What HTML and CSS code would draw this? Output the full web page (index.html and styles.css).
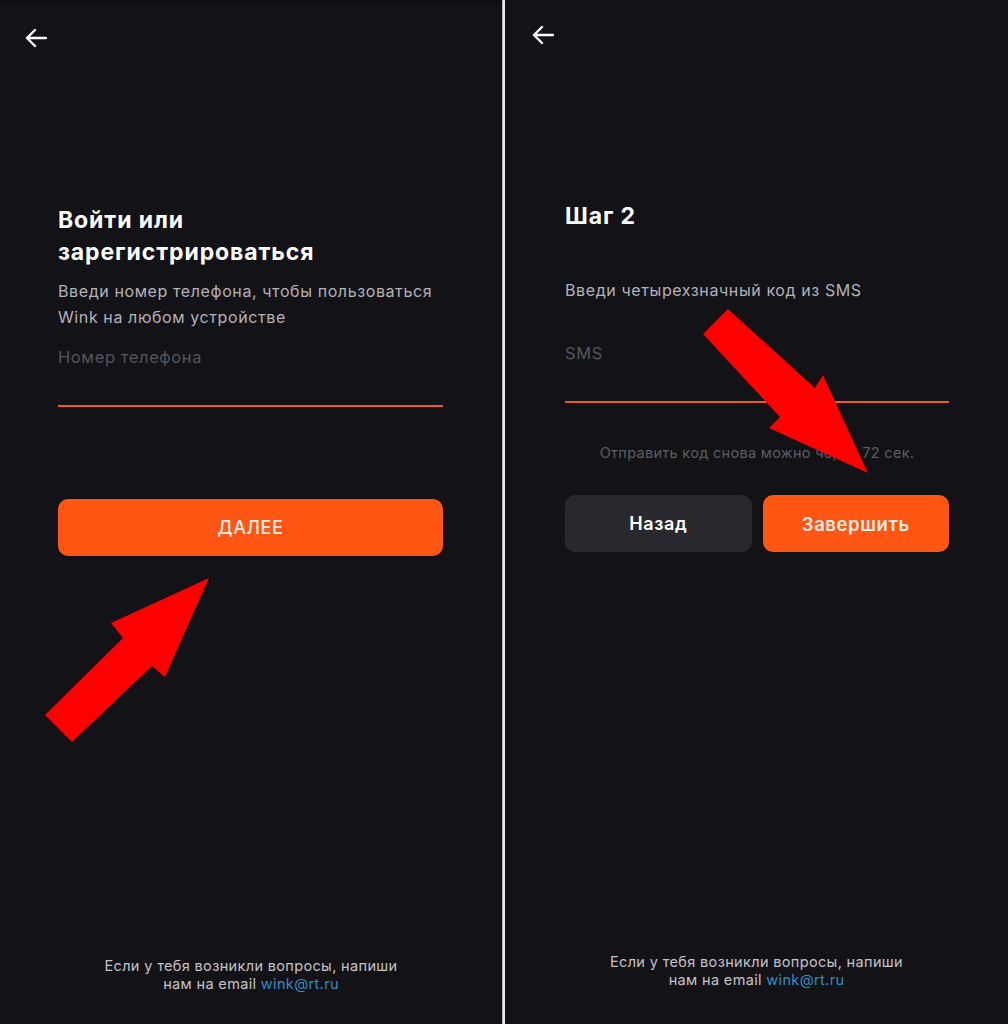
FILE: index.html
```html
<!DOCTYPE html>
<html lang="ru">
<head>
    <meta charset="UTF-8">
    <title>Wink — вход</title>

    <link rel="stylesheet" href="styles.css">

</head>
<body>
<div class="screens">
    <div class="panel panel-left">
        <div class="topbar">
            <svg class="back" width="22" height="20" viewBox="0 0 22 20">
                <path d="M21 10H2M10 2L2 10l8 8" fill="none" stroke="#fff" stroke-width="2.4" stroke-linecap="round" stroke-linejoin="round"/>
            </svg>
        </div>
        <div class="content">
            <h1 class="title">Войти или<br>зарегистрироваться</h1>
            <p class="subtitle">Введи номер телефона, чтобы пользоваться Wink на любом устройстве</p>
            <div class="field"><span class="placeholder">Номер телефона</span></div>
            <div class="btn btn-orange btn-next">ДАЛЕЕ</div>
        </div>
        <div class="footer">Если у тебя возникли вопросы, напиши<br>нам на email <span class="mail">wink@rt.ru</span></div>
    </div>

    <div class="divider"></div>

    <div class="panel panel-right">
        <div class="topbar">
            <svg class="back" width="22" height="20" viewBox="0 0 22 20">
                <path d="M21 10H2M10 2L2 10l8 8" fill="none" stroke="#fff" stroke-width="2.4" stroke-linecap="round" stroke-linejoin="round"/>
            </svg>
        </div>
        <div class="content">
            <h1 class="title">Шаг 2</h1>
            <p class="subtitle">Введи четырехзначный код из SMS</p>
            <div class="field"><span class="placeholder">SMS</span></div>
            <p class="resend">Отправить код снова можно через 72 сек.</p>
            <div class="btn-row">
                <div class="btn btn-grey">Назад</div>
                <div class="btn btn-orange">Завершить</div>
            </div>
        </div>
        <div class="footer">Если у тебя возникли вопросы, напиши<br>нам на email <span class="mail">wink@rt.ru</span></div>
    </div>

    <!-- red pointers drawn over the screenshot -->
    <svg class="pointers" width="1008" height="1024" viewBox="0 0 1008 1024">
        <polygon points="209,578 165,677 152,666 72,742 45,715 123,638 111,623" fill="#ff0000"/>
        <polygon points="728,309 815,388 823,375 868,473 769,428 780,417 703,334" fill="#ff0000"/>
    </svg>
</div>
</body>
</html>
```

FILE: styles.css
```css
* {
    box-sizing: border-box;
}

body {
    margin: 0;
    background-color: #131217;
    font-family: Inter, "Noto Sans", sans-serif;
    color: #fff;
}

.screens {
    position: relative;
    display: flex;
    width: 1008px;
    height: 1024px;
    overflow: hidden;
}

.panel {
    display: flex;
    flex-direction: column;
    height: 1024px;
    background-color: #131217;
}

.panel-left {
    width: 502px;
    border-top: 3px solid #0d0c10;
}

.panel-right {
    width: 503px;
}

.divider {
    width: 3px;
    background: linear-gradient(to right, #8a8a8e, #f2f2f2 40%, #e6e6e6);
}

.topbar {
    height: 48px;
    padding-left: 25px;
}

.panel-left .topbar {
    padding-top: 25px;
}

.panel-right .topbar {
    padding-top: 25px;
    padding-left: 27px;
    height: 45px;
}

.back {
    display: block;
}

.content {
    padding: 0 59px 0 58px;
}

.panel-right .content {
    padding: 0 59px 0 60px;
}

.title {
    margin: 0;
    font-size: 23px;
    line-height: 32px;
    font-weight: 700;
    letter-spacing: 0.9px;
}

.panel-left .title {
    margin-top: 153px;
}

.panel-right .title {
    margin-top: 155px;
}

.subtitle {
    margin: 10px 0 0 0;
    font-size: 16px;
    line-height: 26px;
    letter-spacing: 0.6px;
    color: #b4b3b8;
}

.panel-right .subtitle {
    margin-top: 45px;
}

.field {
    margin-top: 15px;
    padding-bottom: 36px;
    border-bottom: 2px solid #f0592a;
}

.panel-right .field {
    margin-top: 38px;
}

.placeholder {
    display: block;
    font-size: 16.5px;
    line-height: 24px;
    letter-spacing: 0.6px;
    color: #56555b;
}

.btn {
    display: flex;
    align-items: center;
    justify-content: center;
    height: 57px;
    border-radius: 10px;
    font-size: 18px;
    font-weight: 600;
    letter-spacing: 0.6px;
}

.btn-orange {
    background-color: #ff5614;
    color: #f7ece4;
}

.btn-grey {
    background-color: #29282e;
    color: #fff;
}

.btn-next {
    margin-top: 92px;
    font-weight: 500;
}

.resend {
    margin: 40px 0 0 0;
    text-align: center;
    font-size: 14.5px;
    line-height: 20px;
    letter-spacing: 0.3px;
    color: #5d5c62;
}

.btn-row {
    display: flex;
    gap: 11px;
    margin-top: 32px;
}

.btn-row .btn {
    flex: 1;
}

.btn-row .btn-orange {
    font-size: 18.5px;
}

.footer {
    margin-top: auto;
    padding-bottom: 31px;
    text-align: center;
    font-size: 14.5px;
    line-height: 18px;
    letter-spacing: 0.35px;
    color: #c4c3c8;
}

.panel-right .footer {
    padding-bottom: 35px;
}

.mail {
    color: #2f8fc0;
}

.pointers {
    position: absolute;
    left: 0;
    top: 0;
    pointer-events: none;
}
```
